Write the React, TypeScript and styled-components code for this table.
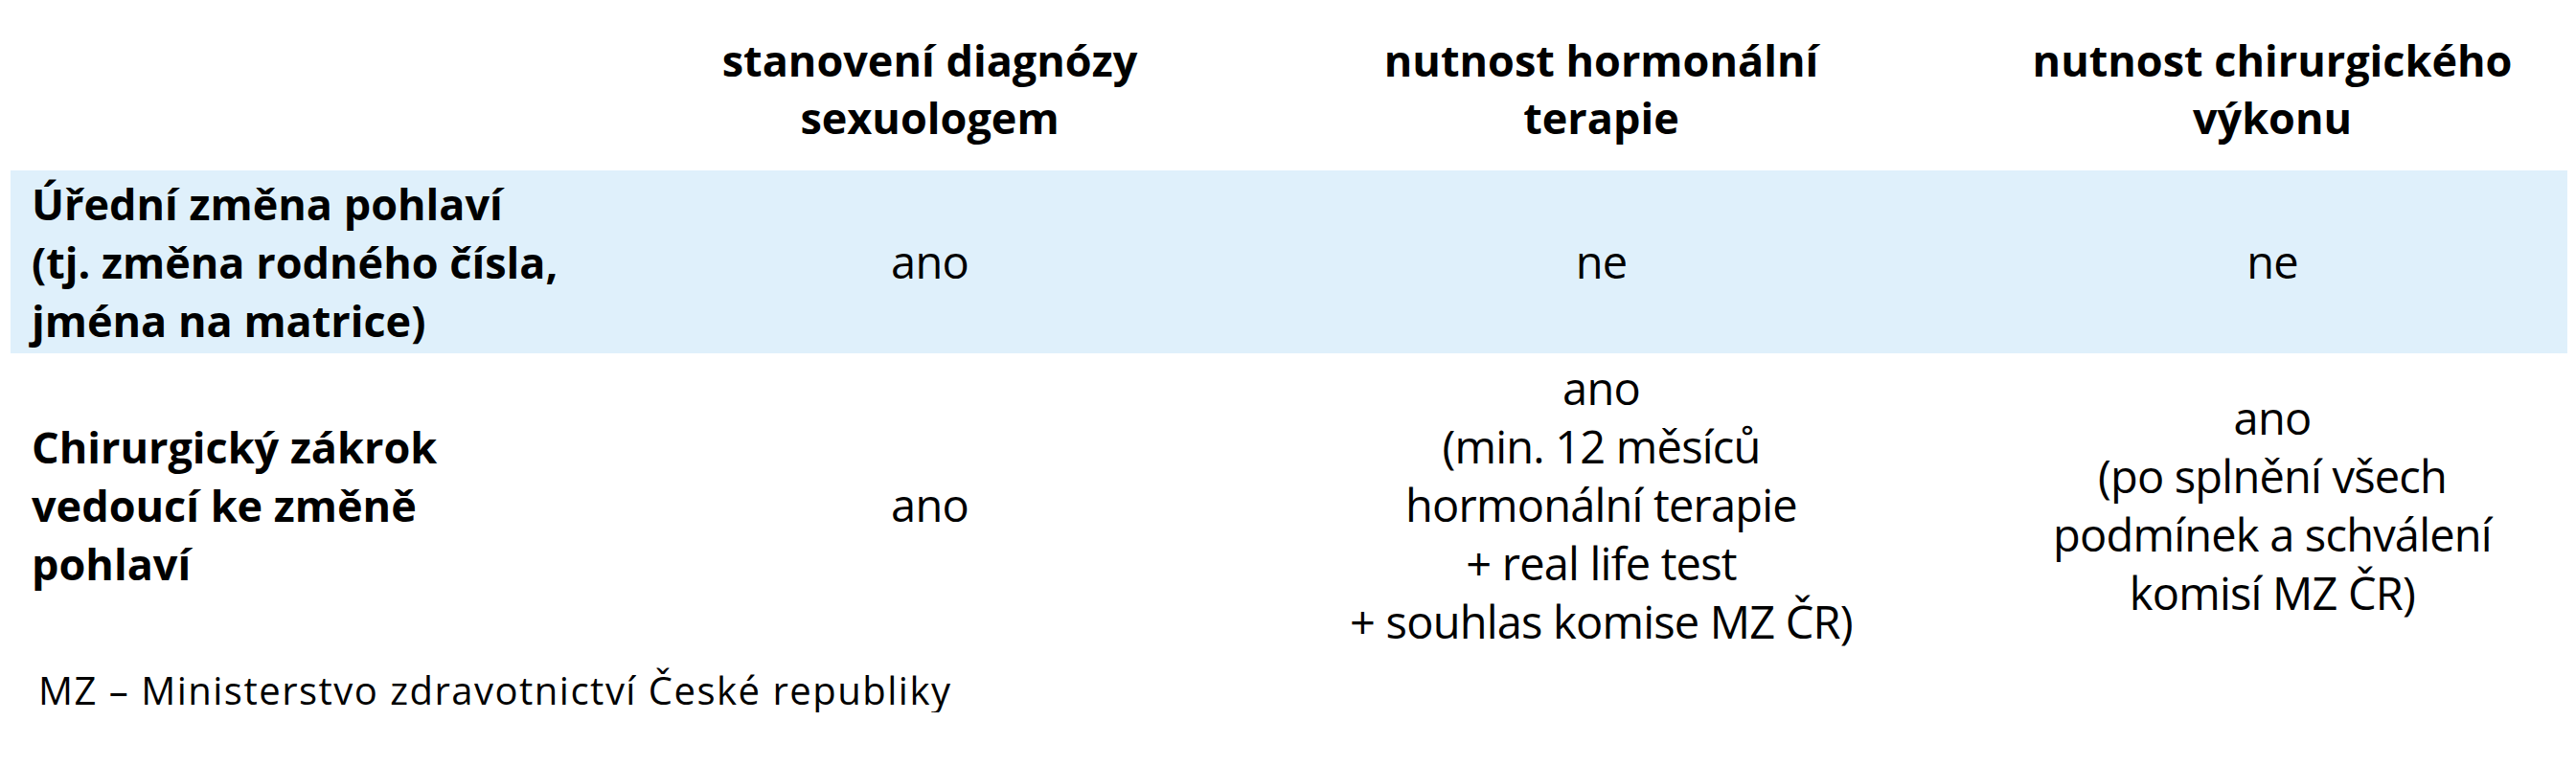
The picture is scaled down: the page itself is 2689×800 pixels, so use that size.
import React from "react";
import styled, { createGlobalStyle, css } from "styled-components";

const GlobalStyle = createGlobalStyle`
  html, body {
    margin: 0;
    padding: 0;
    background: #ffffff;
  }
  body {
    font-family: "Open Sans", "Noto Sans", "DejaVu Sans", sans-serif;
    color: #000000;
  }
`;

const Page = styled.div`
  box-sizing: border-box;
  width: 2669px;
  margin-left: 11px;
`;

const Row = styled.div<{ $shaded?: boolean; $head?: boolean }>`
  display: grid;
  grid-template-columns: 609px 701px 701px 1fr;
  align-items: center;

  ${({ $shaded }) =>
    $shaded &&
    css`
      background: #dff0fb;
      height: 191px;
    `};

  ${({ $head }) =>
    $head &&
    css`
      height: 178px;
      align-items: start;
      padding-top: 33px;
      box-sizing: border-box;
    `};

  ${({ $shaded, $head }) =>
    !$shaded &&
    !$head &&
    css`
      padding: 6px 0;
    `};
`;

const HeadCell = styled.div<{ $last?: boolean }>`
  font-weight: 700;
  font-size: 45px;
  line-height: 60px;
  text-align: center;
  padding-left: ${({ $last }) => ($last ? 42 : 0)}px;
`;

const LabelCell = styled.div`
  font-weight: 700;
  font-size: 45px;
  line-height: 61px;
  padding-left: 22px;
`;

const ValueCell = styled.div<{ $last?: boolean }>`
  font-weight: 400;
  font-size: 47px;
  letter-spacing: -0.8px;
  line-height: 61px;
  text-align: center;
  padding-left: ${({ $last }) => ($last ? 42 : 0)}px;
`;

const Footnote = styled.div`
  margin-top: 12px;
  padding-left: 29px;
  font-size: 40px;
  letter-spacing: 1.5px;
  line-height: 46px;
`;

export default function App() {
  return (
    <>
      <GlobalStyle />
      <Page>
        <Row $head>
          <div />
          <HeadCell>
            stanovení diagnózy
            <br />
            sexuologem
          </HeadCell>
          <HeadCell>
            nutnost hormonální
            <br />
            terapie
          </HeadCell>
          <HeadCell $last>
            nutnost chirurgického
            <br />
            výkonu
          </HeadCell>
        </Row>

        <Row $shaded>
          <LabelCell>
            Úřední změna pohlaví
            <br />
            (tj. změna rodného čísla,
            <br />
            jména na matrice)
          </LabelCell>
          <ValueCell>ano</ValueCell>
          <ValueCell>ne</ValueCell>
          <ValueCell $last>ne</ValueCell>
        </Row>

        <Row>
          <LabelCell>
            Chirurgický zákrok
            <br />
            vedoucí ke změně
            <br />
            pohlaví
          </LabelCell>
          <ValueCell>ano</ValueCell>
          <ValueCell>
            ano
            <br />
            (min. 12 měsíců
            <br />
            hormonální terapie
            <br />
            + real life test
            <br />+ souhlas komise MZ ČR)
          </ValueCell>
          <ValueCell $last>
            ano
            <br />
            (po splnění všech
            <br />
            podmínek a schválení
            <br />
            komisí MZ ČR)
          </ValueCell>
        </Row>

        <Footnote>MZ – Ministerstvo zdravotnictví České republiky</Footnote>
      </Page>
    </>
  );
}
